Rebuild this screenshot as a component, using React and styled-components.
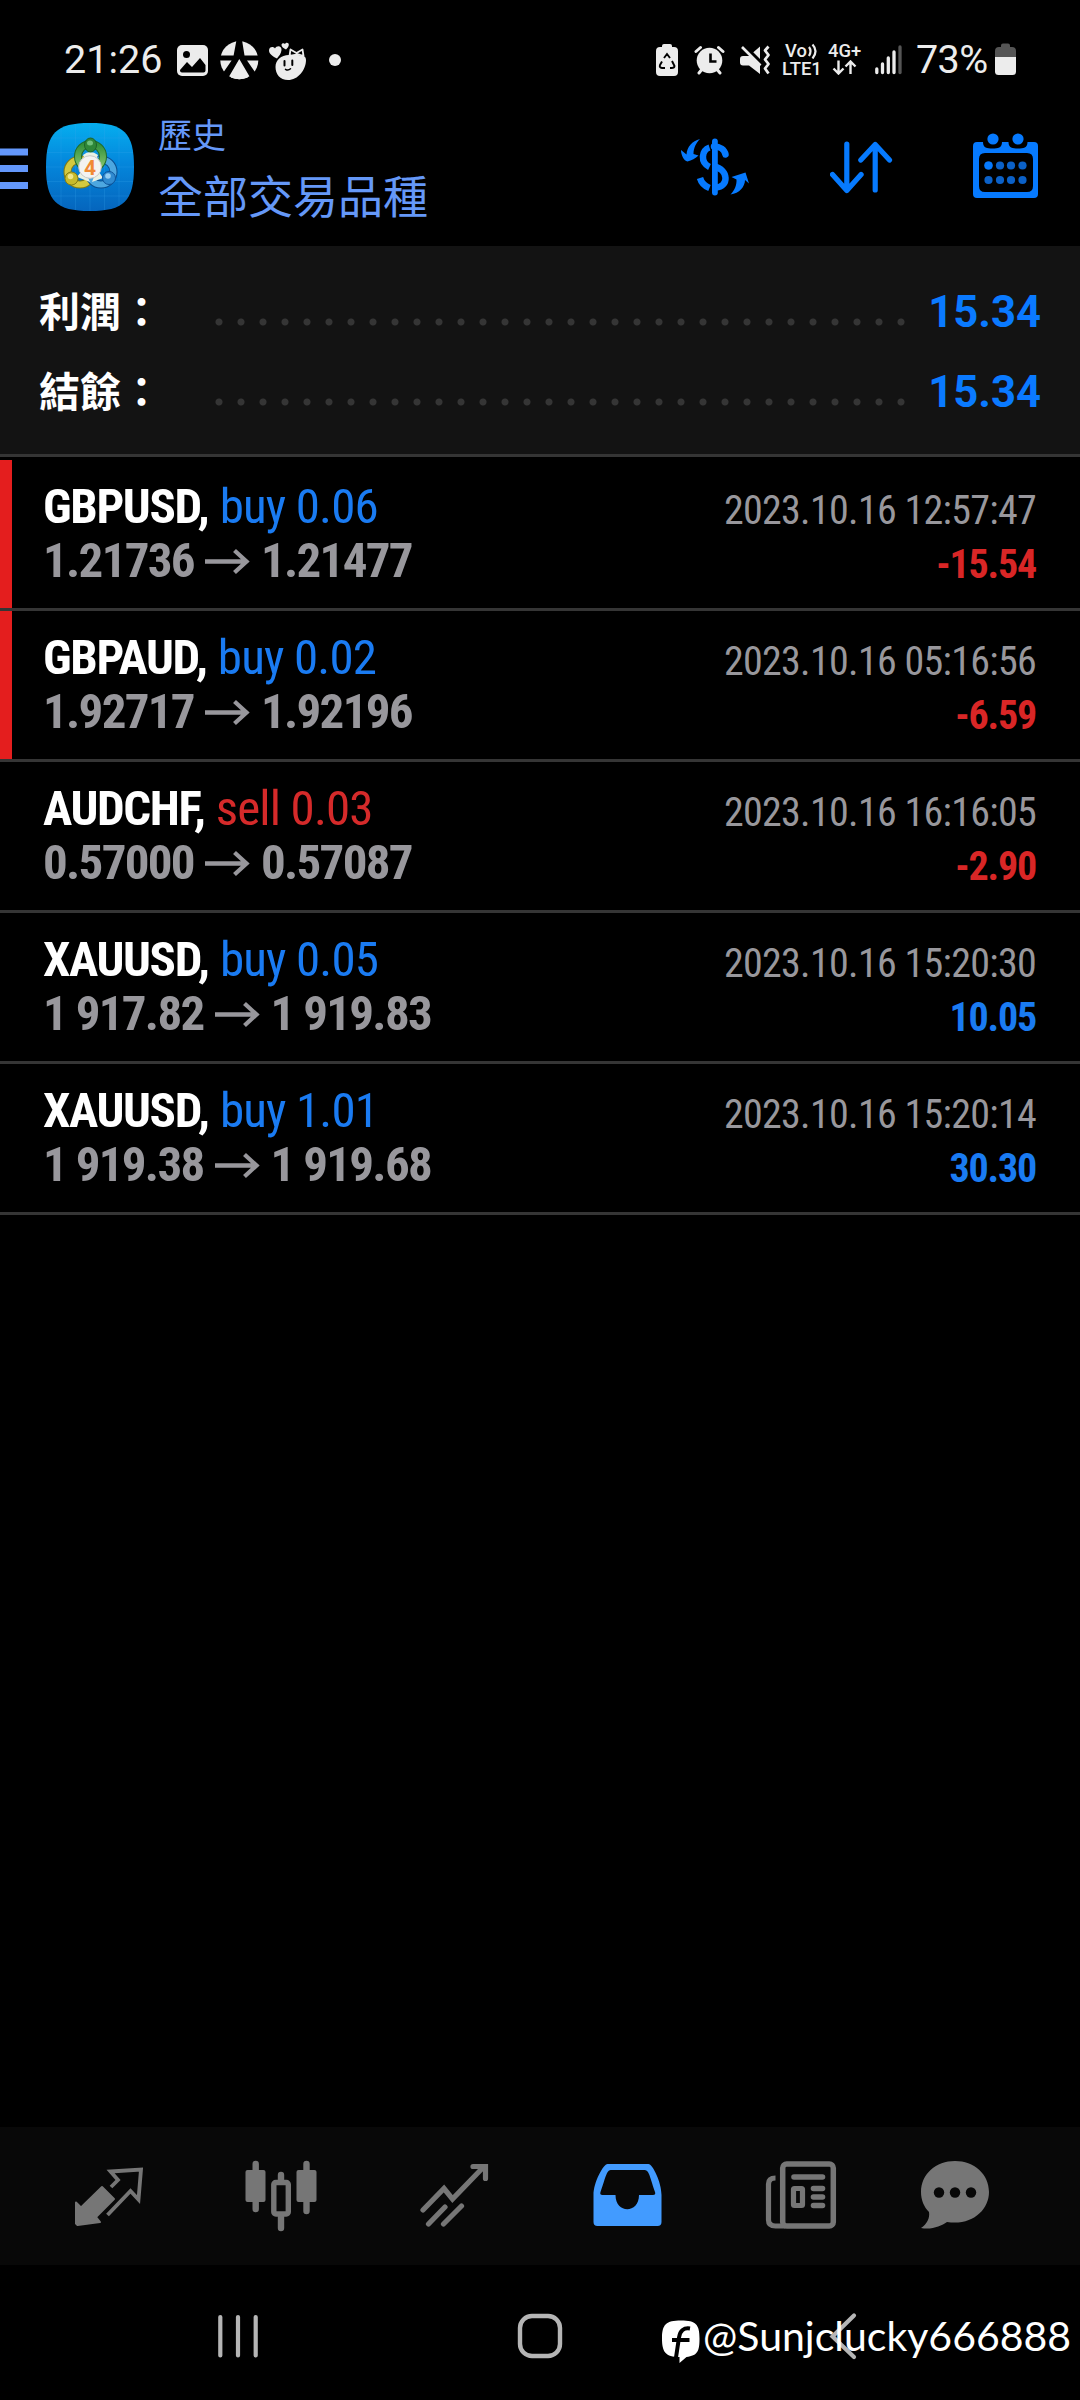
import React from "react";
import styled, { createGlobalStyle } from "styled-components";

const deals = [
  {
    id: 1,
    symbol: "GBPUSD",
    side: "buy",
    volume: "0.06",
    open: "1.21736",
    close: "1.21477",
    time: "2023.10.16 12:57:47",
    profit: "-15.54",
    marked: true,
  },
  {
    id: 2,
    symbol: "GBPAUD",
    side: "buy",
    volume: "0.02",
    open: "1.92717",
    close: "1.92196",
    time: "2023.10.16 05:16:56",
    profit: "-6.59",
    marked: true,
  },
  {
    id: 3,
    symbol: "AUDCHF",
    side: "sell",
    volume: "0.03",
    open: "0.57000",
    close: "0.57087",
    time: "2023.10.16 16:16:05",
    profit: "-2.90",
  },
  {
    id: 4,
    symbol: "XAUUSD",
    side: "buy",
    volume: "0.05",
    open: "1 917.82",
    close: "1 919.83",
    time: "2023.10.16 15:20:30",
    profit: "10.05",
  },
  {
    id: 5,
    symbol: "XAUUSD",
    side: "buy",
    volume: "1.01",
    open: "1 919.38",
    close: "1 919.68",
    time: "2023.10.16 15:20:14",
    profit: "30.30",
  },
];

const summary = [
  { label: "利潤：", value: "15.34" },
  { label: "結餘：", value: "15.34" },
];

const Icon = ({ box, children }) => (
  <Svg viewBox={box.join(" ")} width={box[2]} height={box[3]}>
    {children}
  </Svg>
);

const StatusIcons = () => (
  <StatusBar>
    <Clock>21:26</Clock>
    <Icon box={[177, 36, 31, 50]}>
      <rect x="177" y="45" width="31" height="31" rx="5" fill="#ececec" />
      <circle cx="186.5" cy="54.5" r="3.5" fill="#000" />
      <path
        d="M180 70l7-8 5 5 8-9 5.500 7v5.500q0 2-2 2h-21.500q-2 0-2-2z"
        fill="#000"
      />
    </Icon>
    <Gap $w={12} />
    <Icon box={[220, 36, 39, 50]}>
      <circle cx="239.300" cy="60.300" r="19" fill="#ececec" />
      <path
        d="M236.500 40h5.500l2.500 15.500h15v5h-12.500l9 13-5 5.500-11.700-20-11.700 20-5-5.500 9-13h-12.500v-5h14.500z"
        fill="#000"
      />
      <path d="M239.300 60l8.500 17.500q-8.500 3.500-17 0z" fill="#ececec" />
    </Icon>
    <Gap $w={9} />
    <Icon box={[268, 36, 40, 50]}>
      <g fill="#ececec">
        <path d="M277 58.500c-4-2-8-4.500-8-8 0-4 4.500-4.500 6-2 1.500-3.500 7-3 6.500 1.500-.3 3.500-2.500 6-4.500 8.500z" />
        <path d="M286 49.500c-2.500-1.500-4.500-2.500-4.500-4.500s2.500-2.500 3.500-1c1-2 4-1.500 3.800 1-.2 2-1.500 3-2.800 4.500z" />
        <path d="M275.500 67c0-7 6-12.500 14.500-12 9 0 16-1 16 5 0 10-8 20-18 20-8 0-12.500-6-12.500-13z" />
      </g>
      <path
        d="M289.500 56l1-6.500 6 3.500 6-3.500 1 6.500-6-2-2.500 1z"
        fill="#000"
        stroke="#ececec"
        strokeWidth="1.800"
        strokeLinejoin="round"
      />
      <path
        d="M284.500 61v4.500M292.300 60.500v4.500"
        stroke="#000"
        strokeWidth="2"
        strokeLinecap="round"
      />
      <path
        d="M285.500 69.300q2.700 1.700 5-.5"
        stroke="#000"
        strokeWidth="1.500"
        fill="none"
        strokeLinecap="round"
      />
    </Icon>
    <Gap $w={21} />
    <Icon box={[329, 36, 12, 50]}>
      <circle cx="335" cy="60" r="6" fill="#ececec" />
    </Icon>
    <Spacer />
    <Icon box={[656, 36, 22, 50]}>
      <path
        d="M662 47v-1q0-2 2-2h6q2 0 2 2v1h2q4 0 4 4v21q0 4-4 4h-14q-4 0-4-4v-21q0-4 4-4z"
        fill="#ececec"
      />
      <path
        d="M664 58l3-4 3 4M672 61l2.500 5q0 2-3 2h-1.500M665 68h-3q-3-.5-2-3l2-3.500"
        stroke="#000"
        strokeWidth="1.900"
        fill="none"
      />
    </Icon>
    <Gap $w={16} />
    <Icon box={[694, 36, 31, 50]}>
      <circle cx="709.500" cy="60.500" r="12.800" fill="#ececec" />
      <path
        d="M696 51.500l4.500-4M723 51.500l-4.500-4M699 73l4-5M720 73l-4-5"
        stroke="#ececec"
        strokeWidth="3"
        strokeLinecap="round"
      />
      <path d="M710.500 53.500v8h6" stroke="#000" strokeWidth="2.600" fill="none" />
    </Icon>
    <Gap $w={15} />
    <Icon box={[740, 36, 31, 50]}>
      <path
        d="M740 59q0-3 3-3h6l11-9.500v27.500l-11-8.500h-6q-3 0-3-3z"
        fill="#ececec"
      />
      <path d="M742 44.500l20 20" stroke="#000" strokeWidth="5" />
      <path d="M742 47l18.500 18.500" stroke="#ececec" strokeWidth="2.600" />
      <path
        d="M768.500 46.500l-3.500 4 3.500 4.500-3.500 4.500 3.500 4.500-3.500 4.500 3.500 5"
        stroke="#ececec"
        strokeWidth="2.800"
        fill="none"
        strokeLinejoin="round"
      />
    </Icon>
    <Gap $w={11} />
    <Network $w={40}>
      <VoLine>
        Vo
        <Icon box={[0, 0, 11, 16]}>
          <path
            d="M2 4q3 4 0 9M5.500 1.500q6 6.500 0 14"
            stroke="#ececec"
            strokeWidth="2.200"
            fill="none"
          />
        </Icon>
      </VoLine>
      <span>LTE1</span>
    </Network>
    <Gap $w={6} />
    <Network $w={36}>
      <span>4G+</span>
      <Icon box={[829, 62, 34, 15]}>
        <path
          d="M839.500 62.500v13M834.500 70.500l5 5 5-5M851.500 76v-12.500M846.500 68.500l5-5 5 5"
          stroke="#ececec"
          strokeWidth="2.400"
          fill="none"
        />
      </Icon>
    </Network>
    <Gap $w={10} />
    <Icon box={[874, 36, 29, 50]}>
      <g stroke="#ececec" strokeWidth="3.300" strokeLinecap="round">
        <path d="M876.800 69v3.500M882.500 64v8.500M888.300 58v14.500M894 52v20.500" />
        <path d="M900 47v25.500" stroke="#555" />
      </g>
    </Icon>
    <Percent>73%</Percent>
    <Icon box={[995, 36, 21, 50]}>
      <path
        d="M1001 47v-1.500q0-2 2-2h5q2 0 2 2v1.500h2q4 0 4 4v6h-21v-6q0-4 4-4z"
        fill="#555"
      />
      <path
        d="M995 57h21v14.500q0 3.500-3.500 3.500h-14q-3.500 0-3.500-3.500z"
        fill="#ececec"
      />
    </Icon>
  </StatusBar>
);

const AppLogo = () => (
  <Icon box={[46, 110, 88, 113]}>
    <defs>
      <linearGradient id="logoBg" x1="0" y1="0" x2="0" y2="1">
        <stop offset="0" stopColor="#06aeef" />
        <stop offset="0.45" stopColor="#0487dc" />
        <stop offset="1" stopColor="#0565bd" />
      </linearGradient>
      <linearGradient id="green" x1="0" y1="0" x2="0" y2="1">
        <stop offset="0" stopColor="#2f8f3a" />
        <stop offset="1" stopColor="#8cc870" />
      </linearGradient>
    </defs>
    <path
      d="M90 123c34 0 44 10 44 44s-10 44-44 44-44-10-44-44 10-44 44-44z"
      fill="url(#logoBg)"
    />
    <path
      d="M61 128v78M75.500 124v86M90 123v88M104.500 124v86M119 128v78M51 138h78M47 152.500h86M46 167h88M47 181.500h86M51 196h78"
      stroke="#3ba8ee"
      strokeOpacity="0.22"
      strokeWidth="1"
    />
    <g fill="none" strokeLinecap="round">
      <circle cx="80" cy="172" r="12.500" stroke="#7d7a18" strokeWidth="8" />
      <circle cx="80" cy="172" r="12.500" stroke="#d3c93f" strokeWidth="6" />
      <circle cx="101" cy="172" r="12.500" stroke="#0b4f8f" strokeWidth="8" />
      <circle cx="101" cy="172" r="12.500" stroke="#4da7e0" strokeWidth="6" />
      <circle cx="90.500" cy="156.500" r="12.500" stroke="#1f6b2a" strokeWidth="8" />
      <circle cx="90.500" cy="156.500" r="12.500" stroke="url(#green)" strokeWidth="6" />
    </g>
    <path
      d="M83 155q7-6 15 0l-2 5h-11zM77 177l7-9 6 14zM103 178l-6-9-5 13z"
      fill="#e9f1e4"
    />
    <ellipse cx="90.500" cy="145" rx="6" ry="7" fill="#2e8738" stroke="#1c6326" />
    <circle cx="71.500" cy="178.500" r="6.500" fill="#c7bb2c" stroke="#857c15" />
    <circle cx="109" cy="178" r="6.500" fill="#2f8ad0" stroke="#0d549b" />
    <ellipse cx="90" cy="143" rx="3" ry="2.500" fill="#6fc07a" />
    <circle cx="70.500" cy="176.500" r="2.800" fill="#eee58a" />
    <circle cx="108" cy="176" r="2.800" fill="#8fcbf2" />
    <circle cx="90" cy="167" r="11.300" fill="#f3f3f1" stroke="#c9cac6" />
    <LogoDigit x="90" y="174.500" textAnchor="middle">
      4
    </LogoDigit>
  </Icon>
);

const AppHeader = () => (
  <Header>
    <Icon box={[0, 110, 28, 113]}>
      <path
        d="M0 152h28M0 168.500h28M0 185.500h28"
        stroke="#6397fb"
        strokeWidth="7"
      />
    </Icon>
    <Gap $w={18} />
    <AppLogo />
    <Titles>
      <Caption>歷史</Caption>
      <Heading>全部交易品種</Heading>
    </Titles>
    <Spacer />
    <Icon box={[680, 110, 70, 113]}>
      <g fill="none" stroke="#067aff" strokeWidth="6.500">
        <path d="M709.500 147.500c-8 2.500-9.500 15 0 19.500M700 178q2 7 9.500 10" />
        <path d="M714 146.500c6 0 10.500 3 11.500 8" strokeLinecap="round" />
        <path d="M714 166.500c15 3 15 20.500 2 21" />
      </g>
      <path
        d="M714.900 141.500v51"
        stroke="#067aff"
        strokeWidth="5.800"
        strokeLinecap="round"
      />
      <path
        d="M700 139c-8 2-13 8-13.500 15.500l-5.500-4.500c0 5 3 11 6.500 11.500 4-1 8-3 11-6l-5-1.500c0-6 2.500-11 6.500-15z"
        fill="#067aff"
      />
      <path
        d="M730.500 194.500c9-1 14.500-8 14.500-14.500l4 3.500-3.500-11-14 4.500 5 2.500c.3 6-2 11-6 15z"
        fill="#067aff"
      />
    </Icon>
    <Gap $w={80} />
    <Icon box={[830, 110, 63, 113]}>
      <path
        d="M846.800 144v46M832.500 174.500l14.300 16 14.300-16M875.200 190v-45M860.800 160l14.400-15.500 14.300 15.500"
        stroke="#067aff"
        strokeWidth="5.200"
        fill="none"
        strokeLinecap="round"
        strokeLinejoin="round"
      />
    </Icon>
    <Gap $w={80} />
    <Icon box={[973, 110, 65, 113]}>
      <path
        fillRule="evenodd"
        d="M977 142h6c0 6 4 6.500 9.500 6.500s9.500-.5 9.500-6.500h6.500c0 6 4 6.500 9.500 6.500s9.500-.5 9.500-6.500h6.500q4 0 4 4v48q0 4-4 4h-57q-4 0-4-4v-48q0-4 4-4zm8 11q-6 0-6 6v27q0 6 6 6h42q6 0 6-6v-27q0-6-6-6z"
        fill="#067aff"
      />
      <circle cx="993" cy="139" r="5.600" fill="#067aff" />
      <circle cx="1018" cy="139" r="5.600" fill="#067aff" />
      <g fill="#0b61c8">
        {[165.5, 180].map((cy) =>
          [988.5, 1000, 1011, 1022.5].map((cx) => (
            <circle key={cx} cx={cx} cy={cy} r="4.100" />
          ))
        )}
      </g>
      <circle cx="988.500" cy="165.500" r="4.100" fill="#067aff" />
    </Icon>
  </Header>
);

const DealRow = ({ deal }) => {
  return (
    <Row>
      <Marker $marked={deal.marked} />
      <div>
        <Line>
          <Symbol>{deal.symbol},</Symbol>{" "}
          <Side $side={deal.side}>
            {deal.side} {deal.volume}
          </Side>
        </Line>
        <Prices>
          <span>{deal.open}</span>
          <Icon box={[0, 0, 45, 30]}>
            <path
              d="M0 15.500h42M29.500 4.500l12 11-12 11"
              stroke="#98979c"
              strokeWidth="4.300"
              fill="none"
            />
          </Icon>
          <span>{deal.close}</span>
        </Prices>
      </div>
      <DealRight>
        <Time>{deal.time}</Time>
        <Profit $loss={deal.profit.startsWith("-")}>{deal.profit}</Profit>
      </DealRight>
    </Row>
  );
};

const TabBar = () => (
  <Tabs>
    <Icon box={[74, 2127, 69, 138]}>
      <path
        d="M102 2187l12 12-18 18 4 5-22.500 3-1.500-1.500v-21l5 5z"
        fill="#767676"
        stroke="#767676"
        strokeWidth="2"
        strokeLinejoin="round"
      />
      <path
        d="M111 2187l7-7-7.500-8.500 30.500-2-2.500 30-8-8.500-23 24"
        fill="none"
        stroke="#767676"
        strokeWidth="3.800"
      />
    </Icon>
    <Gap $w={102} />
    <Icon box={[245, 2127, 72, 138]}>
      <path
        d="M255.700 2164v45M281 2175v12M281 2216v12M306.500 2164v47"
        stroke="#767676"
        strokeWidth="6.400"
        strokeLinecap="round"
      />
      <rect x="245.500" y="2170" width="20" height="32" rx="2" fill="#767676" />
      <rect x="296.500" y="2170" width="20" height="32" rx="2" fill="#767676" />
      <rect
        x="273.800"
        y="2182.500"
        width="14.500"
        height="31.500"
        rx="2"
        fill="#080808"
        stroke="#767676"
        strokeWidth="5.400"
      />
    </Icon>
    <Gap $w={103} />
    <Icon box={[420, 2127, 69, 138]}>
      <path
        d="M423 2210l21-21.500 8.500 10.500 31-32M473 2166.500h12.500v12M428.500 2224l16.500-17M443.500 2224l18-18"
        stroke="#767676"
        strokeWidth="5.200"
        fill="none"
        strokeLinecap="round"
      />
    </Icon>
    <Gap $w={104} />
    <Icon box={[593, 2127, 69, 138]}>
      <path
        fillRule="evenodd"
        d="M607.500 2164h41c4 0 13 18 13 31v27q0 4-4 4h-60q-4 0-4-4v-27c0-13 10-31 14-31zm4 6c-5 0-5 5-11 22q-1 3 2 3h13c0 19 23.500 19 23.500 0h14q3 0 2-3c-6-18-6-22-11-22z"
        fill="#429bff"
      />
    </Icon>
    <Gap $w={103} />
    <Icon box={[765, 2127, 72, 138]}>
      <g fill="none" stroke="#767676">
        <rect x="782.700" y="2164" width="50.600" height="62" rx="4" strokeWidth="5.500" />
        <path d="M775.500 2178q-7 0-7 6v36q0 6 7 6h10" strokeWidth="5.200" />
        <path
          d="M794 2177h28.500M813.500 2188.500h9M813.500 2197h9M813.500 2205.500h9"
          strokeWidth="5.600"
          strokeLinecap="round"
        />
        <rect x="793.500" y="2188.500" width="9" height="17" rx="1" strokeWidth="5.200" />
      </g>
    </Icon>
    <Gap $w={84} />
    <Icon box={[921, 2127, 70, 138]}>
      <path
        d="M955 2161c19 0 34 13 34 31s-17 34-42 30c-6 4-15 8-26 6 6-4 9-10 8-16-5-5-8-12-8-20 0-18 15-31 34-31z"
        fill="#767676"
      />
      <g fill="#080808">
        <circle cx="939" cy="2192.500" r="5.200" />
        <circle cx="955" cy="2192.500" r="5.200" />
        <circle cx="971" cy="2192.500" r="5.200" />
      </g>
    </Icon>
  </Tabs>
);

const NavBar = () => (
  <SystemNav>
    <Icon box={[218, 2265, 40, 135]}>
      <path
        d="M220.300 2317v38.500M238 2317v38.500M255.700 2317v38.500"
        stroke="#b5b5b5"
        strokeWidth="4.200"
        strokeLinecap="round"
      />
    </Icon>
    <Gap $w={259} />
    <Icon box={[517, 2265, 46, 135]}>
      <rect
        x="520"
        y="2316"
        width="40"
        height="40"
        rx="12"
        fill="none"
        stroke="#b5b5b5"
        strokeWidth="4.400"
      />
    </Icon>
    <Gap $w={266} />
    <Icon box={[829, 2265, 28, 135]}>
      <path
        d="M854 2315.500l-21.500 21 21.500 20.500"
        stroke="#b5b5b5"
        strokeWidth="4.200"
        fill="none"
        strokeLinecap="round"
      />
    </Icon>
    <Watermark>
      <Icon box={[662, 2320, 38, 44]}>
        <path
          d="M681 2320.500c15 0 18.500 4 18.500 18 0 13-2 17-13 18.500l-7 6v-6c-14 0-17.500-5-17.500-18.500 0-14 4-18 19-18z"
          fill="#fff"
        />
        <path
          d="M690 2328.500c-6-1-10 2-11 9l-3 20M672 2340h17.500"
          stroke="#000"
          strokeWidth="4"
          fill="none"
        />
      </Icon>
      <Handle>@Sunjclucky666888</Handle>
    </Watermark>
  </SystemNav>
);

const App = () => {
  return (
    <Screen>
      <GlobalStyle />
      <StatusIcons />
      <AppHeader />
      <Summary>
        {summary.map((item) => (
          <SummaryRow key={item.label}>
            <Label>{item.label}</Label>
            <Dots />
            <Value>{item.value}</Value>
          </SummaryRow>
        ))}
      </Summary>
      <List>
        {deals.map((deal) => (
          <DealRow key={deal.id} deal={deal} />
        ))}
      </List>
      <TabBar />
      <NavBar />
    </Screen>
  );
};

export default App;

const GlobalStyle = createGlobalStyle`
  * {
    box-sizing: border-box;
  }
  body {
    margin: 0;
    background: #000;
    font-family: Roboto, "Noto Sans CJK TC", sans-serif;
  }
`;
const Screen = styled.div`
  width: 1080px;
  height: 2400px;
  display: flex;
  flex-direction: column;
  overflow: hidden;
  background: #000;
`;
const Svg = styled.svg`
  display: block;
  flex: none;
`;
const Gap = styled.div`
  flex: none;
  width: ${({ $w }) => $w}px;
`;
const Spacer = styled.div`
  flex: 1;
`;
const StatusBar = styled.header`
  height: 110px;
  padding: 36px 64px 0 64px;
  display: flex;
  align-items: flex-start;
  color: #ececec;
  white-space: nowrap;
`;
const Clock = styled.span`
  width: 113px;
  font-size: 39.5px;
  line-height: 48px;
`;
const Percent = styled.span`
  width: 92px;
  padding-left: 13px;
  font-size: 39.5px;
  line-height: 48px;
  letter-spacing: -0.6px;
`;
const Network = styled.div`
  width: ${({ $w }) => $w}px;
  padding-top: 6px;
  display: flex;
  flex-direction: column;
  font-size: 18.4px;
  font-weight: 500;
  line-height: 18px;
`;
const VoLine = styled.span`
  padding-left: 3px;
  display: flex;
  align-items: center;
`;
const Header = styled.div`
  height: 136px;
  padding-right: 42px;
  display: flex;
`;
const LogoDigit = styled.text`
  font-size: 21px;
  font-weight: 700;
  fill: #f08a34;
`;
const Titles = styled.div`
  padding: 0 0 0 24px;
  color: #6598f8;
  font-family: "Noto Sans CJK TC", sans-serif;
  white-space: nowrap;
`;
const Caption = styled.div`
  margin-top: -1px;
  font-size: 34px;
  line-height: 50px;
`;
const Heading = styled.h1`
  margin: 0;
  padding-top: 11px;
  font-size: 45px;
  font-weight: 400;
  line-height: 50px;
`;
const Summary = styled.section`
  height: 211px;
  padding: 26px 39px 0;
  background: #131313;
  border-bottom: 3px solid #353535;
`;
const SummaryRow = styled.div`
  height: 80px;
  display: flex;
  align-items: center;
  font-weight: 700;
`;
const Label = styled.span`
  width: 169px;
  padding-bottom: 6px;
  color: #fff;
  font-family: "Noto Sans CJK TC", sans-serif;
  font-size: 41px;
`;
const Dots = styled.div`
  width: 704px;
  height: 8px;
  margin-top: 20px;
  background: radial-gradient(circle at 11px 4px, #353535 3px, transparent 4px)
    0 0 / 22px 8px;
`;
const Value = styled.span`
  flex: 1;
  padding-top: 1px;
  color: #0a7aff;
  font-size: 43.6px;
  text-align: right;
`;
const List = styled.section`
  flex: 1;
  padding-top: 3px;
`;
const Row = styled.article`
  height: 151px;
  padding-right: 44px;
  display: flex;
  border-bottom: 3px solid #353535;
  font-stretch: 75%;
  line-height: 54px;
  white-space: nowrap;

  > :not(:first-child) {
    padding-top: 20px;
  }
`;
const Marker = styled.div`
  width: 12px;
  margin-right: 31px;
  background: ${({ $marked }) => ($marked ? "#e41e1e" : "transparent")};
`;
const Line = styled.div`
  font-size: 49px;
`;
const Symbol = styled.span`
  color: #fff;
  font-weight: 700;
  letter-spacing: -1.4px;
`;
const Side = styled.span`
  color: ${({ $side }) => ($side === "buy" ? "#1a7bf2" : "#d52a2a")};
  letter-spacing: -0.85px;
`;
const Prices = styled.div`
  display: flex;
  align-items: center;
  gap: 11px;
  color: #98979c;
  font-size: 49px;
  font-weight: 700;
  letter-spacing: -1.7px;
`;
const DealRight = styled.div`
  margin: 4px 0 0 auto;
  text-align: right;
`;
const Time = styled.div`
  color: #98979c;
  font-size: 40px;
  letter-spacing: -0.7px;
`;
const Profit = styled.div`
  color: ${({ $loss }) => ($loss ? "#d92626" : "#1a7bf2")};
  font-size: 40px;
  font-weight: 700;
  letter-spacing: -1.2px;
`;
const Tabs = styled.nav`
  height: 138px;
  padding-left: 74px;
  display: flex;
  background: #080808;
`;
const SystemNav = styled.footer`
  position: relative;
  height: 135px;
  padding-left: 218px;
  display: flex;
`;
const Watermark = styled.div`
  position: absolute;
  top: 55px;
  left: 662px;
  display: flex;
  align-items: flex-start;
`;
const Handle = styled.span`
  padding-left: 3px;
  color: #fff;
  font-family: Lato, sans-serif;
  font-size: 41px;
  line-height: 32px;
`;
